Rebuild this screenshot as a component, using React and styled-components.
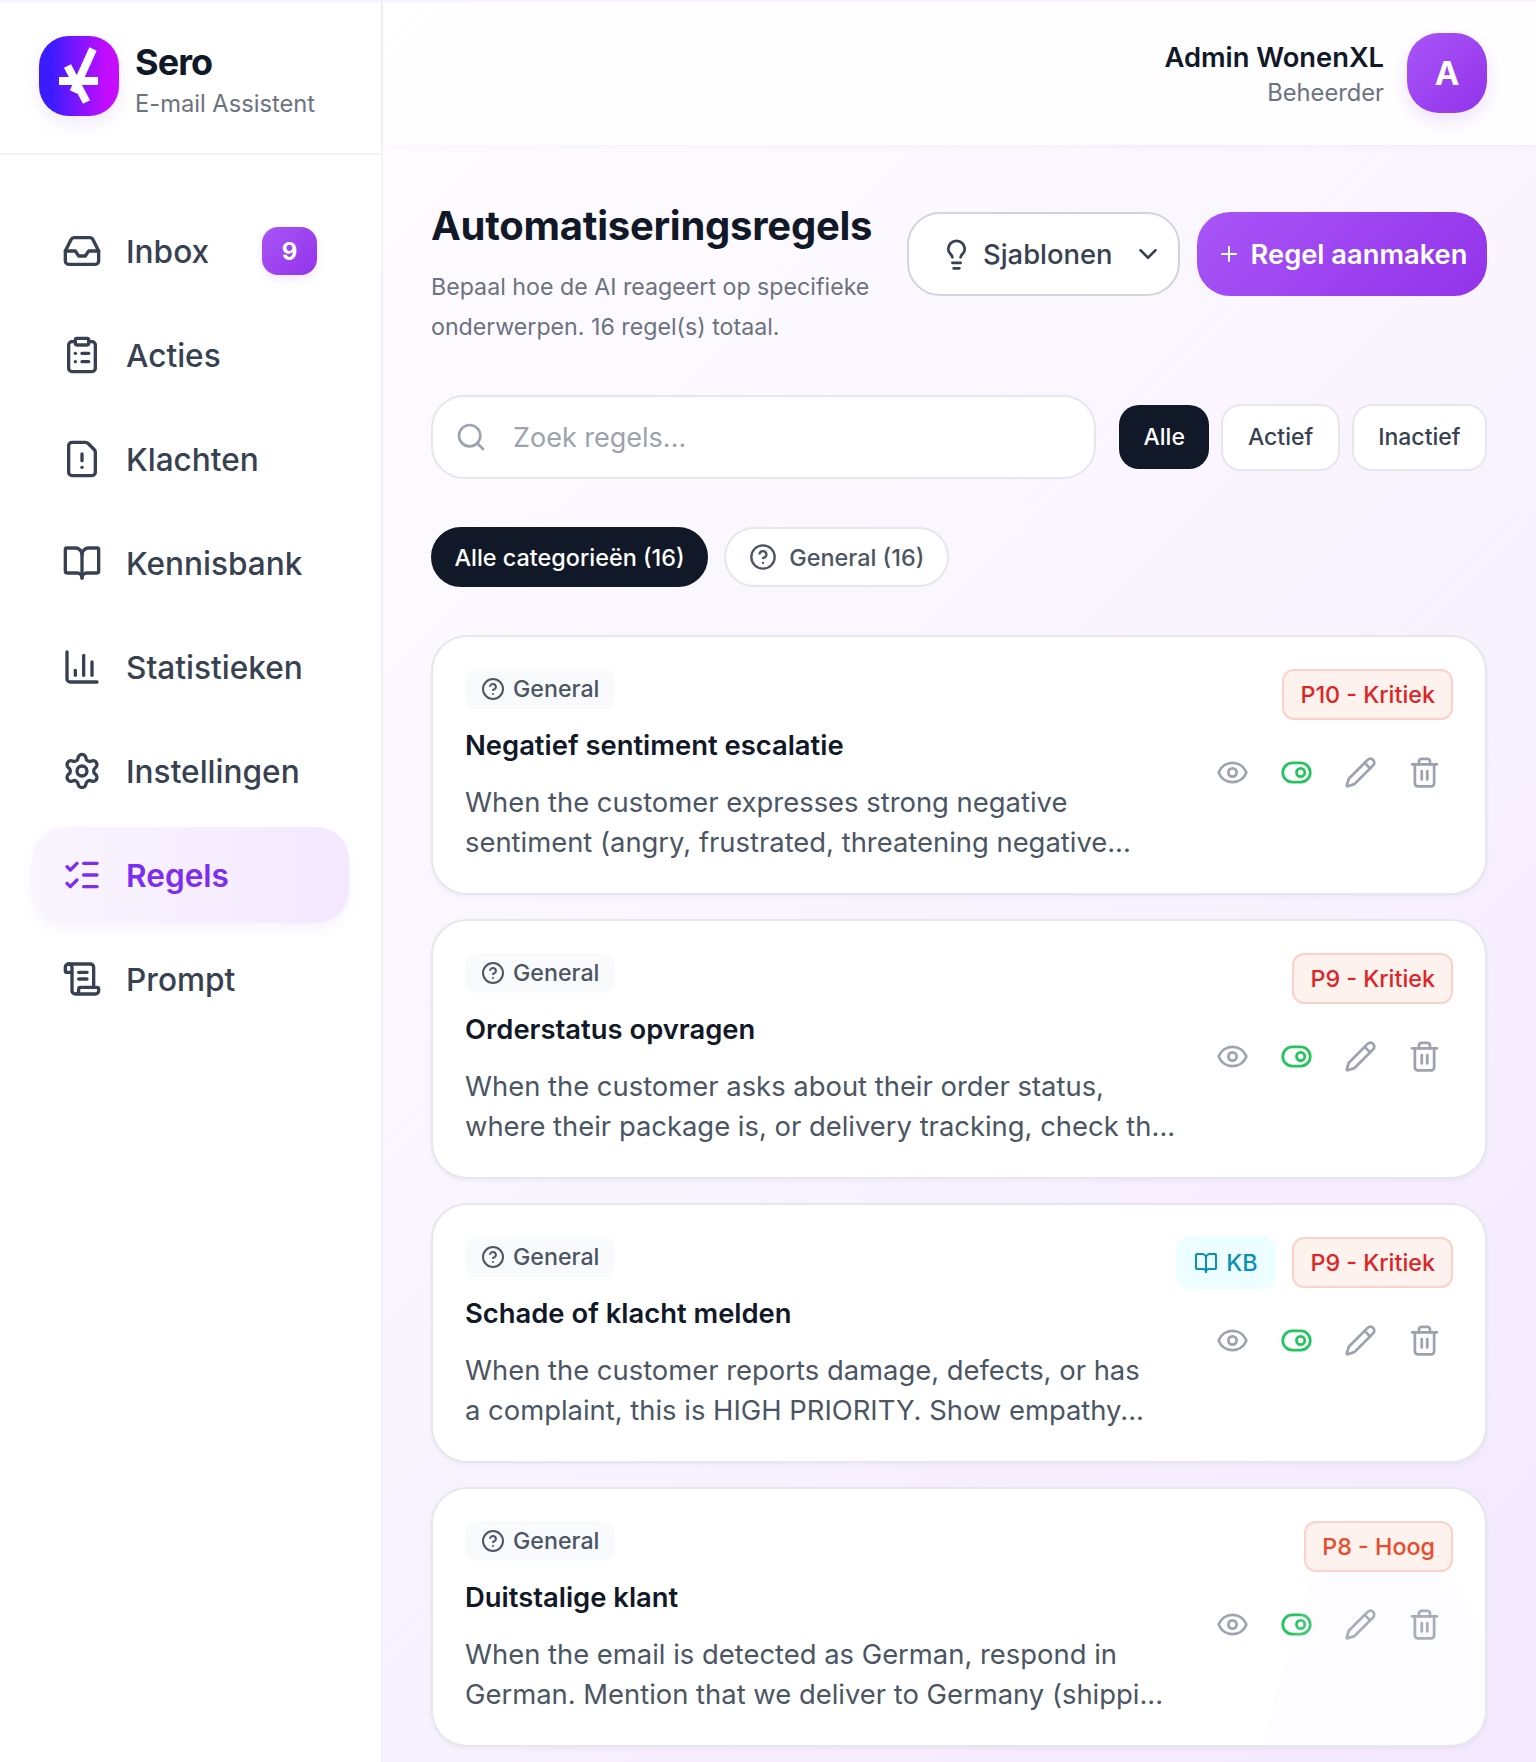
import React from "react";
import styled, { createGlobalStyle } from "styled-components";
import {
  Inbox,
  ClipboardList,
  FileWarning,
  BookOpen,
  BarChart3,
  Settings,
  ListChecks,
  ScrollText,
  Lightbulb,
  ChevronDown,
  Plus,
  Search,
  CircleHelp,
  Eye,
  ToggleRight,
  Pencil,
  Trash2,
} from "lucide-react";

const GlobalStyle = createGlobalStyle`
  html, body {
    margin: 0;
    padding: 0;
    height: 100%;
  }
  body {
    font-family: "Inter", "Liberation Sans", sans-serif;
    background: #fff;
  }
  * {
    box-sizing: border-box;
  }
`;

const Page = styled.div`
  display: flex;
  height: 100vh;
  overflow: hidden;
  background: linear-gradient(135deg, #ffffff 0%, #faf5ff 50%, #f3e8ff 100%);
`;

const Sidebar = styled.aside`
  flex: 0 0 383px;
  background: #fff;
  border-right: 2px solid #f3f0f7;
  box-shadow: inset 0 2px 0 #f8f0fd;
`;

const Brand = styled.div`
  height: 155px;
  display: flex;
  align-items: center;
  gap: 16px;
  padding: 0 39px 2px;
  border-bottom: 2px solid #f3f0f7;
`;

const Logo = styled.div`
  width: 80px;
  height: 80px;
  border-radius: 30px;
  background: linear-gradient(90deg, #3b1cff 15%, #c60cff 85%);
  box-shadow: 0 8px 18px rgba(120, 60, 220, 0.1);
  display: flex;
  align-items: center;
  justify-content: center;
`;

const BrandText = styled.div`
  padding-top: 8px;
`;

const BrandName = styled.div`
  font-size: 36px;
  line-height: 44px;
  font-weight: 700;
  letter-spacing: -0.9px;
  color: #111827;
`;

const BrandSub = styled.div`
  margin-top: 4px;
  font-size: 23.7px;
  line-height: 32px;
  color: #6b7280;
`;

const Nav = styled.nav`
  display: flex;
  flex-direction: column;
  gap: 8px;
  padding: 48px 32px;
`;

const NavItem = styled.div`
  height: 96px;
  display: flex;
  align-items: center;
  gap: 24px;
  padding: 0 30px;
  border-radius: 32px;
  font-size: 31.6px;
  color: ${(p) => (p.$active ? "#7c2df0" : "#374151")};
  font-weight: ${(p) => (p.$active ? 600 : 500)};
  background: ${(p) =>
    p.$active ? "linear-gradient(90deg, #faf5ff, #f3e8ff)" : "transparent"};
  box-shadow: ${(p) => (p.$active ? "0 6px 14px rgba(120, 60, 220, 0.06)" : "none")};
`;

const NavBadge = styled.span`
  margin-left: auto;
  margin-right: 2px;
  flex: 0 0 55px;
  height: 48px;
  border-radius: 16px;
  display: flex;
  align-items: center;
  justify-content: center;
  font-size: 24px;
  font-weight: 700;
  color: #fff;
  background: linear-gradient(135deg, #a855f7, #9333ea);
  box-shadow: 0 4px 8px rgba(120, 60, 220, 0.12);
`;

const Main = styled.div`
  flex: 1;
  min-width: 0;
`;

const Topbar = styled.header`
  height: 145px;
  display: flex;
  align-items: center;
  justify-content: flex-end;
  gap: 23px;
  padding: 0 49px 0 48px;
  background: rgba(255, 255, 255, 0.75);
  box-shadow: 0 1px 6px rgba(90, 60, 150, 0.06), inset 0 2px 0 #f8f0fd;
`;

const UserInfo = styled.div`
  text-align: right;
  padding-top: 2px;
`;

const UserName = styled.div`
  font-size: 27.3px;
  line-height: 40px;
  font-weight: 600;
  color: #111827;
`;

const UserRole = styled.div`
  margin-top: -1px;
  font-size: 23.7px;
  line-height: 32px;
  color: #6b7280;
`;

const Avatar = styled.div`
  width: 80px;
  height: 80px;
  border-radius: 32px;
  display: flex;
  align-items: center;
  justify-content: center;
  font-size: 33px;
  font-weight: 700;
  color: #fff;
  background: linear-gradient(135deg, #a855f7, #9333ea);
  box-shadow: 0 8px 16px rgba(120, 60, 220, 0.12);
`;

const Content = styled.main`
  padding: 57px 49px 0 48px;
`;

const TitleRow = styled.div`
  display: flex;
  justify-content: space-between;
  align-items: flex-start;
`;

const TitleBlock = styled.div`
  width: 460px;
`;

const Title = styled.h1`
  margin: 0;
  font-size: 40px;
  line-height: 48px;
  font-weight: 700;
  letter-spacing: -0.25px;
  color: #111827;
`;

const Description = styled.p`
  margin: 17px 0 0;
  font-size: 23.2px;
  line-height: 40px;
  color: #6b7280;
`;

const TitleActions = styled.div`
  display: flex;
  gap: 17px;
  margin-top: 10px;
`;

const TemplateButton = styled.button`
  height: 84px;
  width: 273px;
  display: flex;
  align-items: center;
  padding: 0 0 0 31px;
  gap: 10px;
  background: #fff;
  border: 2px solid #d1d5db;
  border-radius: 33px;
  font: 500 27.4px "Inter", sans-serif;
  color: #374151;
  svg:last-child {
    margin-left: 10px;
  }
`;

const CreateButton = styled.button`
  height: 84px;
  width: 290px;
  display: flex;
  align-items: center;
  justify-content: center;
  gap: 10px;
  border: 0;
  border-radius: 33px;
  font: 600 27.3px "Inter", sans-serif;
  color: #fff;
  background: linear-gradient(135deg, #a855f7, #9333ea);
`;

const FilterRow = styled.div`
  display: flex;
  align-items: center;
  justify-content: space-between;
  margin-top: 48px;
`;

const SearchBox = styled.div`
  flex: 0 0 665px;
  height: 84px;
  display: flex;
  align-items: center;
  gap: 26px;
  padding: 0 22px;
  background: #fff;
  border: 2px solid #e5e7eb;
  border-radius: 33px;
  font-size: 27px;
  color: #9ca3af;
`;

const StatusButtons = styled.div`
  display: flex;
  align-items: center;
  gap: 12px;
`;

const StatusButton = styled.div`
  height: ${(p) => (p.$active ? "64px" : "67px")};
  padding: 0 24.5px;
  display: flex;
  align-items: center;
  border-radius: 20px;
  font-size: 23px;
  font-weight: 500;
  color: ${(p) => (p.$active ? "#fff" : "#374151")};
  background: ${(p) => (p.$active ? "#111827" : "#fff")};
  border: ${(p) => (p.$active ? "0" : "2px solid #e5e7eb")};
`;

const CategoryRow = styled.div`
  display: flex;
  gap: 16px;
  margin-top: 48px;
`;

const CategoryPill = styled.div`
  height: 60px;
  display: flex;
  align-items: center;
  gap: 12px;
  padding: 0 ${(p) => (p.$active ? "21.5px" : "23px")};
  border-radius: 30px;
  font-size: 23.4px;
  font-weight: 500;
  color: ${(p) => (p.$active ? "#fff" : "#4b5563")};
  background: ${(p) => (p.$active ? "#111827" : "#fff")};
  border: 2px solid ${(p) => (p.$active ? "#111827" : "#e5e7eb")};
`;

const CardList = styled.div`
  display: flex;
  flex-direction: column;
  gap: 24px;
  margin-top: 48px;
`;

const Card = styled.article`
  position: relative;
  height: 260px;
  display: flex;
  gap: 24px;
  padding: 32px;
  background: #fff;
  border: 2px solid #e5e7eb;
  border-radius: 36px;
  box-shadow: 0 2px 4px rgba(60, 40, 110, 0.05);
  ${(p) =>
    p.$tinted &&
    `
    &::after {
      content: "";
      position: absolute;
      inset: 0;
      border-radius: 34px;
      background: rgba(243, 232, 255, 0.14);
      clip-path: polygon(880px 84px, 1017px 84px, 1052px 150px, 1052px 256px, 828px 256px);
      pointer-events: none;
    }
  `}
`;

const CardBody = styled.div`
  flex: 1;
  min-width: 0;
`;

const CategoryTag = styled.span`
  display: flex;
  width: fit-content;
  align-items: center;
  gap: 8px;
  height: 40px;
  padding: 0 16px;
  border-radius: 12px;
  background: #f9fafb;
  font-size: 23.2px;
  font-weight: 500;
  color: #4b5563;
`;

const CardTitle = styled.h3`
  margin: 16px 0 0;
  font-size: 27.4px;
  line-height: 40px;
  font-weight: 600;
  color: #111827;
`;

const CardText = styled.p`
  margin: 17px 0 0;
  width: 720px;
  font-size: 27.4px;
  line-height: 40px;
  color: #4b5563;
`;

const CardSide = styled.div`
  display: flex;
  flex-direction: column;
  align-items: flex-end;
  gap: 24px;
`;

const BadgeRow = styled.div`
  display: flex;
  align-items: center;
  gap: 16px;
`;

const PriorityBadge = styled.span`
  height: 51px;
  display: flex;
  align-items: center;
  padding: 0 16px;
  border-radius: 12px;
  border: 2px solid #fed0c8;
  background: #fef2ef;
  font-size: 23.3px;
  font-weight: 500;
  color: ${(p) => p.$color};
`;

const KbBadge = styled.span`
  height: 53px;
  margin: -1px 0;
  display: flex;
  align-items: center;
  gap: 8px;
  padding: 0 19px 0 18px;
  border-radius: 14px;
  background: #ecfeff;
  font-size: 23.3px;
  font-weight: 500;
  color: #0891b2;
`;

const Actions = styled.div`
  display: flex;
  gap: 8px;
  margin-right: 1px;
`;

const ActionButton = styled.div`
  width: 56px;
  height: 56px;
  display: flex;
  align-items: center;
  justify-content: center;
  color: ${(p) => p.$color || "#9ca3af"};
`;

const navItems = [
  { label: "Inbox", icon: Inbox, badge: 9 },
  { label: "Acties", icon: ClipboardList },
  { label: "Klachten", icon: FileWarning },
  { label: "Kennisbank", icon: BookOpen },
  { label: "Statistieken", icon: BarChart3 },
  { label: "Instellingen", icon: Settings },
  { label: "Regels", icon: ListChecks, active: true },
  { label: "Prompt", icon: ScrollText },
];

const rules = [
  {
    title: "Negatief sentiment escalatie",
    text: "When the customer expresses strong negative sentiment (angry, frustrated, threatening negative...",
    priority: "P10 - Kritiek",
    color: "#dc2626",
  },
  {
    title: "Orderstatus opvragen",
    text: "When the customer asks about their order status, where their package is, or delivery tracking, check th...",
    priority: "P9 - Kritiek",
    color: "#dc2626",
  },
  {
    title: "Schade of klacht melden",
    text: "When the customer reports damage, defects, or has a\u00a0complaint, this is HIGH PRIORITY. Show empathy...",
    priority: "P9 - Kritiek",
    color: "#dc2626",
    kb: true,
  },
  {
    title: "Duitstalige klant",
    text: "When the email is detected as German, respond in German. Mention that we deliver to Germany (shippi...",
    priority: "P8 - Hoog",
    color: "#ea4c2b",
    tinted: true,
  },
];

const SeroMark = () => (
  <svg width="80" height="80" viewBox="0 0 80 80" fill="none" stroke="#fff" strokeWidth="8">
    <path d="M20 45H59" />
    <path d="M54 13L34.5 56" />
    <path d="M28.5 30L47.5 66" />
  </svg>
);

const App = () => (
  <Page>
    <GlobalStyle />
    <Sidebar>
      <Brand>
        <Logo>
          <SeroMark />
        </Logo>
        <BrandText>
          <BrandName>Sero</BrandName>
          <BrandSub>E-mail Assistent</BrandSub>
        </BrandText>
      </Brand>
      <Nav>
        {navItems.map(({ label, icon: Icon, badge, active }) => (
          <NavItem key={label} $active={active}>
            <Icon size={40} strokeWidth={2} />
            {label}
            {badge && <NavBadge>{badge}</NavBadge>}
          </NavItem>
        ))}
      </Nav>
    </Sidebar>
    <Main>
      <Topbar>
        <UserInfo>
          <UserName>Admin WonenXL</UserName>
          <UserRole>Beheerder</UserRole>
        </UserInfo>
        <Avatar>A</Avatar>
      </Topbar>
      <Content>
        <TitleRow>
          <TitleBlock>
            <Title>Automatiseringsregels</Title>
            <Description>
              Bepaal hoe de AI reageert op specifieke onderwerpen. 16 regel(s) totaal.
            </Description>
          </TitleBlock>
          <TitleActions>
            <TemplateButton>
              <Lightbulb size={33} />
              Sjablonen
              <ChevronDown size={30} />
            </TemplateButton>
            <CreateButton>
              <Plus size={24} />
              Regel aanmaken
            </CreateButton>
          </TitleActions>
        </TitleRow>
        <FilterRow>
          <SearchBox>
            <Search size={32} />
            Zoek regels...
          </SearchBox>
          <StatusButtons>
            <StatusButton $active>Alle</StatusButton>
            <StatusButton>Actief</StatusButton>
            <StatusButton>Inactief</StatusButton>
          </StatusButtons>
        </FilterRow>
        <CategoryRow>
          <CategoryPill $active>Alle categorieën (16)</CategoryPill>
          <CategoryPill>
            <CircleHelp size={28} />
            General (16)
          </CategoryPill>
        </CategoryRow>
        <CardList>
          {rules.map((rule) => (
            <Card key={rule.title} $tinted={rule.tinted}>
              <CardBody>
                <CategoryTag>
                  <CircleHelp size={24} />
                  General
                </CategoryTag>
                <CardTitle>{rule.title}</CardTitle>
                <CardText>{rule.text}</CardText>
              </CardBody>
              <CardSide>
                <BadgeRow>
                  {rule.kb && (
                    <KbBadge>
                      <BookOpen size={24} />
                      KB
                    </KbBadge>
                  )}
                  <PriorityBadge $color={rule.color}>{rule.priority}</PriorityBadge>
                </BadgeRow>
                <Actions>
                  <ActionButton><Eye size={33} /></ActionButton>
                  <ActionButton $color="#22c55e"><ToggleRight size={33} /></ActionButton>
                  <ActionButton><Pencil size={33} /></ActionButton>
                  <ActionButton><Trash2 size={33} /></ActionButton>
                </Actions>
              </CardSide>
            </Card>
          ))}
        </CardList>
      </Content>
    </Main>
  </Page>
);

export default App;
